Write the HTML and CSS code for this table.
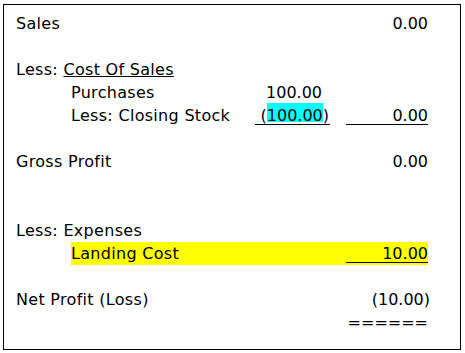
FILE: index.html
```html
<!DOCTYPE html>
<html>
<head>
<meta charset="utf-8">
<link rel="stylesheet" href="styles.css">
</head>
<body>
<div class="sheet">
  <div class="row"><span class="label">Sales</span><span class="amt">0.00</span></div>
  <div class="row"></div>
  <div class="row"><span class="label">Less: <span class="ul">Cost Of Sales</span></span></div>
  <div class="row sub"><span class="label">Purchases</span><span class="mid">100.00</span></div>
  <div class="row sub"><span class="label">Less: Closing Stock</span><span class="mid rule"><span class="neg">(<span class="sel">100.00</span>)</span></span><span class="amt rule">0.00</span></div>
  <div class="row"></div>
  <div class="row"><span class="label">Gross Profit</span><span class="amt">0.00</span></div>
  <div class="row"></div>
  <div class="row"></div>
  <div class="row"><span class="label">Less: Expenses</span></div>
  <div class="row sub hl"><span class="label">Landing Cost</span><span class="amt rule">10.00</span></div>
  <div class="row"></div>
  <div class="row"><span class="label">Net Profit (Loss)</span><span class="amt"><span class="neg-r">(10.00)</span></span></div>
  <div class="row"><span class="amt">======</span></div>
</div>
</body>
</html>
```
FILE: styles.css
```css
html, body {
  margin: 0;
  padding: 0;
  background: #ffffff;
}
body {
  font-family: "DejaVu Sans", Verdana, sans-serif;
  font-size: 16px;
  color: #000000;
}
.sheet {
  box-sizing: border-box;
  margin: 4px 0 0 3px;
  width: 458px;
  height: 346px;
  border: 1px solid #000000;
  padding: 7px 32px 0 12px;
}
.row {
  display: grid;
  grid-template-columns: 1fr 75px 82px;
  column-gap: 16px;
  height: 23px;
  line-height: 23px;
  white-space: nowrap;
}
.row.sub {
  margin-left: 55px;
}
.row.hl {
  background: #ffff00;
}
.label {
  grid-column: 1;
  letter-spacing: 0.3px;
}
.mid {
  grid-column: 2;
  text-align: right;
  padding-right: 8px;
}
.amt {
  grid-column: 3;
  text-align: right;
}
.rule {
  background: linear-gradient(#000000, #000000) 0 20px / 100% 1px no-repeat;
}
.ul {
  text-decoration: underline;
}
.neg {
  margin-right: -7px;
}
.neg-r {
  margin-right: -2px;
}
.sel {
  padding-top: 3px;
  background: linear-gradient(#00ffff, #00ffff) 0 0 / 100% 19px no-repeat;
}
```
